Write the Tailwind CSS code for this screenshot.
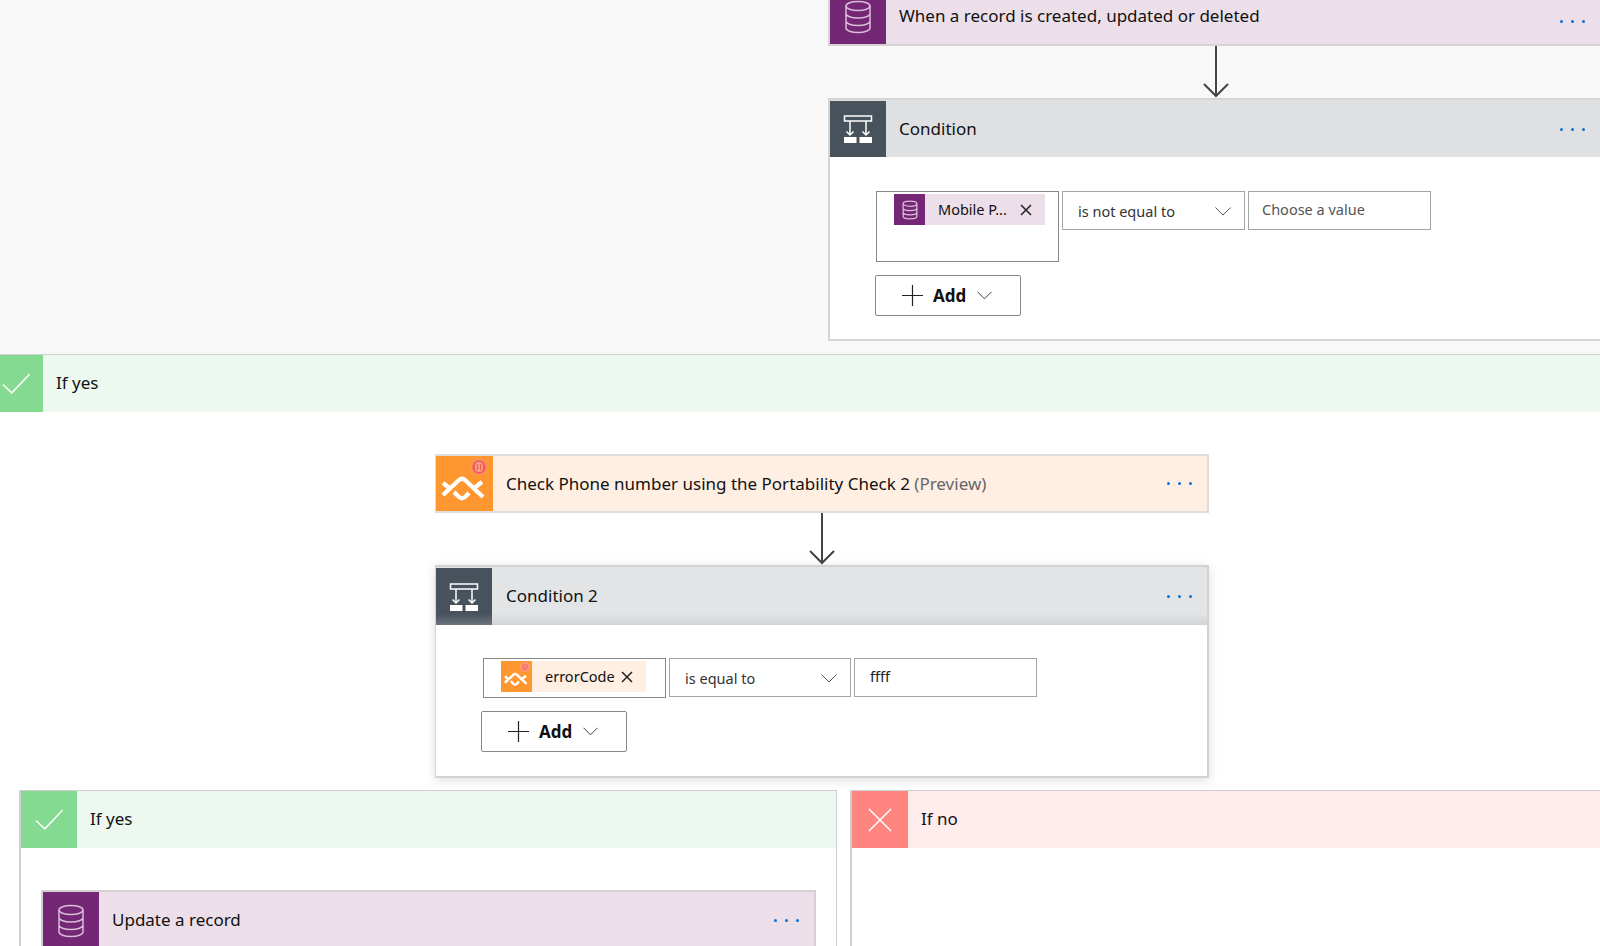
<!DOCTYPE html>
<html>
<head>
<meta charset="utf-8">
<script src="https://cdn.jsdelivr.net/npm/@tailwindcss/browser@4"></script>
</head>
<body class="bg-white">
<div class="w-[1600px] h-[946px] overflow-hidden bg-white text-[17px] leading-[24px] text-[#111] font-['Noto_Sans',sans-serif]">

  <!-- top canvas -->
  <div class="h-[354px] bg-[#f8f8f8] pl-[828px] w-[1600px] overflow-hidden">
    <div class="w-[772px] h-[59px] -mt-[13px] flex border-2 border-r-0 border-[#d6d2d5] bg-[#ecdfe9] items-stretch">
      <div class="w-[56px] bg-[#742774] flex items-center justify-center shrink-0">
        <svg width="28" height="34" viewBox="0 0 28 34" fill="none" stroke="#d9bdd9" stroke-width="1.5"><ellipse cx="14" cy="6" rx="12" ry="4.5"/><path d="M2 6v22c0 2.5 5.4 4.5 12 4.500s12-2 12-4.500V6M2 13.500c0 2.500 5.400 4.500 12 4.500s12-2 12-4.500M2 21c0 2.500 5.400 4.500 12 4.500s12-2 12-4.500"/></svg>
      </div>
      <div class="flex-1 pl-[13px] flex items-center justify-between pr-[15px]">
        <span class="mt-[-1px]">When a record is created, updated or deleted</span>
        <div class="flex gap-[8px] mt-[10px]"><i class="w-[3px] h-[3px] rounded-full bg-[#0a72d8]"></i><i class="w-[3px] h-[3px] rounded-full bg-[#0a72d8]"></i><i class="w-[3px] h-[3px] rounded-full bg-[#0a72d8]"></i></div>
      </div>
    </div>
    <div class="h-[52px] w-[776px] flex justify-center">
      <svg width="28" height="52" viewBox="0 0 28 52" fill="none" stroke="#444" stroke-width="2"><path d="M14 0V50M2 38L14 50L26 38"/></svg>
    </div>
    <div class="w-[772px] h-[243px] border-t-2 border-l-2 border-b-2 border-[#d5d5d5] bg-white">
      <div class="h-[57px] flex bg-[#dfe0e2] pt-[1px]">
        <div class="w-[56px] bg-[#47525d] flex items-center justify-center shrink-0">
          <svg width="30" height="30" viewBox="0 0 30 30" fill="none" stroke="#fff" stroke-width="1.5"><rect x="1.5" y="2" width="27" height="5"/><path d="M7 7v14M3.5 17.5L7 21l3.500-3.500M23 7v14M19.500 17.500L23 21l3.500-3.500"/><rect x="1" y="23" width="12.500" height="6" fill="#fff" stroke="none"/><rect x="16.500" y="23" width="12.500" height="6" fill="#fff" stroke="none"/></svg>
        </div>
        <div class="flex-1 pl-[13px] flex items-center justify-between pr-[15px]">
          <span>Condition</span>
          <div class="flex gap-[8px]"><i class="w-[3px] h-[3px] rounded-full bg-[#0a72d8]"></i><i class="w-[3px] h-[3px] rounded-full bg-[#0a72d8]"></i><i class="w-[3px] h-[3px] rounded-full bg-[#0a72d8]"></i></div>
        </div>
      </div>
      <div class="pl-[46px] pt-[34px]">
        <div class="flex gap-[3px] items-start text-[14.5px]">
          <div class="w-[183px] h-[71px] border border-[#8a8886] pl-[17px] pt-[2px]">
            <div class="w-[151px] h-[31px] bg-[#ecdfe9] flex items-center">
              <div class="w-[31px] h-[31px] bg-[#742774] flex items-center justify-center shrink-0">
                <svg width="16" height="20" viewBox="0 0 28 34" fill="none" stroke="#d9bdd9" stroke-width="2.200"><ellipse cx="14" cy="6" rx="12" ry="4.500"/><path d="M2 6v22c0 2.500 5.400 4.500 12 4.500s12-2 12-4.500V6M2 13.500c0 2.500 5.400 4.500 12 4.500s12-2 12-4.500M2 21c0 2.500 5.400 4.500 12 4.500s12-2 12-4.500"/></svg>
              </div>
              <span class="ml-[13px] mt-[-1px]">Mobile P...</span>
              <svg class="ml-[13px] mt-[1px]" width="12" height="12" viewBox="0 0 12 12" stroke="#222" stroke-width="1.500"><path d="M1 1L11 11M11 1L1 11"/></svg>
            </div>
          </div>
          <div class="w-[183px] h-[39px] border border-[#a5a5a5] pl-[15px] pr-[13px] flex items-center justify-between">
            <span class="mt-[1px] text-[#333]">is not equal to</span>
            <svg class="mt-[2px]" width="16" height="9" viewBox="0 0 16 9" fill="none" stroke="#555"><path d="M.5.500L8 8L15.500.500"/></svg>
          </div>
          <div class="w-[183px] h-[39px] border border-[#a5a5a5] pl-[13px] flex items-center">
            <span class="mt-[-3px] text-[#555]">Choose a value</span>
          </div>
        </div>
        <div class="mt-[13px] -ml-[1px] w-[146px] h-[41px] border border-[#8a8886] rounded-[2px] flex items-center pl-[26px]">
          <svg width="21" height="21" viewBox="0 0 21 21" stroke="#222" stroke-width="1.200"><path d="M10.500 0V21M0 10.500H21"/></svg>
          <span class="ml-[10px] font-bold">Add</span>
          <svg class="ml-[11px]" width="15" height="9" viewBox="0 0 16 9" fill="none" stroke="#333"><path d="M.5.500L8 8L15.500.500"/></svg>
        </div>
      </div>
    </div>
  </div>

  <!-- if yes bar -->
  <div class="h-[58px] border-t border-[#d5d0d0] bg-[#edf8f0] flex">
    <div class="w-[43px] bg-[#84da90] flex items-center justify-start pl-[2px]">
      <svg width="28" height="21" viewBox="0 0 30 22" fill="none" stroke="#fff" stroke-width="1.600"><path d="M1 12L10.500 21L29.500 1"/></svg>
    </div>
    <div class="pl-[13px] pb-[2px] flex items-center">If yes</div>
  </div>

  <!-- nested scope -->
  <div class="pl-[435px] pt-[42px]">
    <div class="w-[774px] h-[59px] border-2 border-l border-[#e1dcd8] bg-[#ffefe2] flex">
      <div class="w-[57px] bg-[#ff9731] flex items-center justify-center shrink-0">
        <svg width="57" height="55" viewBox="0 1 57 55" fill="none"><g stroke="#fff" stroke-width="4.200" stroke-linejoin="round"><path d="M7 40L23 25Q26 22.500 29 25L47 42"/><path d="M7 28L14 33.500M18 37L23 42Q26 44.500 29 42L33 38M37 34L46 27"/></g><circle cx="43" cy="12" r="7.500" fill="#f2604f" stroke="#ff9878" stroke-width="1.200"/><rect x="40" y="8" width="6" height="8" rx="1.500" fill="none" stroke="#ffc9b5"/><path d="M43 8V16" stroke="#ffc9b5"/></svg>
      </div>
      <div class="flex-1 pl-[13px] flex items-center justify-between pr-[15px]">
        <span>Check Phone number using the Portability Check 2 <span class="text-[#666]">(Preview)</span></span>
        <div class="flex gap-[8px]"><i class="w-[3px] h-[3px] rounded-full bg-[#0a72d8]"></i><i class="w-[3px] h-[3px] rounded-full bg-[#0a72d8]"></i><i class="w-[3px] h-[3px] rounded-full bg-[#0a72d8]"></i></div>
      </div>
    </div>
    <div class="h-[52px] w-[774px] flex justify-center">
      <svg width="28" height="52" viewBox="0 0 28 52" fill="none" stroke="#444" stroke-width="2"><path d="M14 0V50M2 38L14 50L26 38"/></svg>
    </div>
    <div class="w-[774px] h-[213px] border-2 border-l border-[#d2d2d2] bg-white shadow-[0_2px_10px_rgba(0,0,0,0.14)]">
      <div class="h-[58px] flex bg-gradient-to-b from-[#e3e4e6] from-80% to-[#d2d3d5] pt-[1px]">
        <div class="w-[56px] bg-gradient-to-b from-[#47525d] from-80% to-[#6c747c] flex items-center justify-center shrink-0">
          <svg width="30" height="30" viewBox="0 0 30 30" fill="none" stroke="#fff" stroke-width="1.500"><rect x="1.500" y="2" width="27" height="5"/><path d="M7 7v14M3.500 17.500L7 21l3.500-3.500M23 7v14M19.500 17.500L23 21l3.500-3.500"/><rect x="1" y="23" width="12.500" height="6" fill="#fff" stroke="none"/><rect x="16.500" y="23" width="12.500" height="6" fill="#fff" stroke="none"/></svg>
        </div>
        <div class="flex-1 pl-[14px] flex items-center justify-between pr-[15px]">
          <span class="mt-[-2px]">Condition 2</span>
          <div class="flex gap-[8px]"><i class="w-[3px] h-[3px] rounded-full bg-[#0a72d8]"></i><i class="w-[3px] h-[3px] rounded-full bg-[#0a72d8]"></i><i class="w-[3px] h-[3px] rounded-full bg-[#0a72d8]"></i></div>
        </div>
      </div>
      <div class="pl-[47px] pt-[33px]">
        <div class="flex gap-[3px] items-start text-[14.5px]">
          <div class="w-[183px] h-[40px] border border-[#8a8886] pl-[17px] pt-[2px]">
            <div class="w-[145px] h-[31px] bg-[#ffefe2] flex items-center">
              <div class="w-[31px] h-[31px] bg-[#ff9731] flex items-center justify-center shrink-0">
                <svg width="31" height="31" viewBox="0 0 57 57" fill="none"><g stroke="#fff" stroke-width="4.500" stroke-linejoin="round"><path d="M7 40L23 25Q26 22.500 29 25L47 42"/><path d="M7 28L14 33.500M18 37L23 42Q26 44.500 29 42L33 38M37 34L46 27"/></g><circle cx="44" cy="11" r="8" fill="#f98071" stroke="#ffb0a0" stroke-width="1.500"/></svg>
              </div>
              <span class="ml-[13px] mt-[-1px]">errorCode</span>
              <svg class="ml-[6px] mt-[1px]" width="12" height="12" viewBox="0 0 12 12" stroke="#222" stroke-width="1.500"><path d="M1 1L11 11M11 1L1 11"/></svg>
            </div>
          </div>
          <div class="w-[182px] h-[39px] border border-[#a5a5a5] pl-[15px] pr-[13px] flex items-center justify-between">
            <span class="mt-[1px] text-[#333]">is equal to</span>
            <svg class="mt-[2px]" width="16" height="9" viewBox="0 0 16 9" fill="none" stroke="#555"><path d="M.5.500L8 8L15.500.500"/></svg>
          </div>
          <div class="w-[183px] h-[39px] border border-[#a5a5a5] pl-[15px] flex items-center">
            <span class="mt-[-3px] text-[#222]">ffff</span>
          </div>
        </div>
        <div class="mt-[13px] -ml-[2px] w-[146px] h-[41px] border border-[#8a8886] rounded-[2px] flex items-center pl-[26px]">
          <svg width="21" height="21" viewBox="0 0 21 21" stroke="#222" stroke-width="1.200"><path d="M10.500 0V21M0 10.500H21"/></svg>
          <span class="ml-[10px] font-bold">Add</span>
          <svg class="ml-[11px]" width="15" height="9" viewBox="0 0 16 9" fill="none" stroke="#333"><path d="M.5.500L8 8L15.500.500"/></svg>
        </div>
      </div>
    </div>
  </div>

  <!-- branches -->
  <div class="flex pl-[19px] pt-[12px] gap-[13px]">
    <div class="w-[818px] h-[200px] border-t border-l-2 border-r border-[#cfcfcf] shrink-0 bg-white">
      <div class="h-[57px] bg-[#edf8f0] flex">
        <div class="w-[56px] bg-[#84da90] flex items-center justify-center">
          <svg width="28" height="21" viewBox="0 0 30 22" fill="none" stroke="#fff" stroke-width="1.600"><path d="M1 12L10.500 21L29.500 1"/></svg>
        </div>
        <div class="pl-[13px] pb-[2px] flex items-center">If yes</div>
      </div>
      <div class="pl-[20px] pt-[42px]">
        <div class="w-[775px] h-[100px] border-2 border-[#d5d0d4] bg-[#ecdfe9] flex">
          <div class="w-[56px] h-[57px] bg-[#742774] flex items-center justify-center shrink-0">
            <svg width="28" height="34" viewBox="0 0 28 34" fill="none" stroke="#d9bdd9" stroke-width="1.500"><ellipse cx="14" cy="6" rx="12" ry="4.500"/><path d="M2 6v22c0 2.500 5.400 4.500 12 4.500s12-2 12-4.500V6M2 13.500c0 2.500 5.400 4.500 12 4.500s12-2 12-4.500M2 21c0 2.500 5.400 4.500 12 4.500s12-2 12-4.500"/></svg>
          </div>
          <div class="flex-1 h-[57px] pl-[13px] flex items-center justify-between pr-[15px]">
            <span class="mt-[-1px]">Update a record</span>
            <div class="flex gap-[8px]"><i class="w-[3px] h-[3px] rounded-full bg-[#0a72d8]"></i><i class="w-[3px] h-[3px] rounded-full bg-[#0a72d8]"></i><i class="w-[3px] h-[3px] rounded-full bg-[#0a72d8]"></i></div>
          </div>
        </div>
      </div>
    </div>
    <div class="flex-1 h-[200px] border-t border-l-2 border-[#cfcfcf] bg-white">
      <div class="h-[57px] bg-[#ffecec] flex">
        <div class="w-[56px] bg-[#ff8581] flex items-center justify-center">
          <svg width="24" height="24" viewBox="0 0 24 24" stroke="#fff" stroke-width="1.500"><path d="M1 1L23 23M23 1L1 23"/></svg>
        </div>
        <div class="pl-[13px] pb-[2px] flex items-center">If no</div>
      </div>
    </div>
  </div>
</div>
</body>
</html>
